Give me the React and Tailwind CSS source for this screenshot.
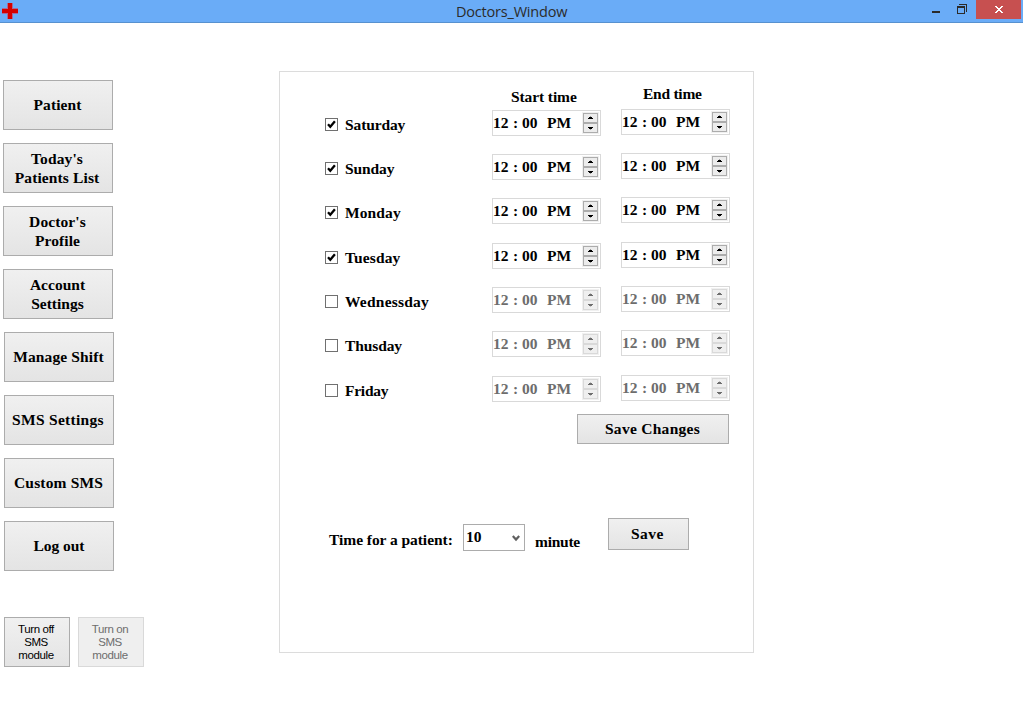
import React from "react";

const DAYS = [
  { name: "Saturday", on: true, row: "h-[44px]", track: "tracking-[-0.12px]" },
  { name: "Sunday", on: true, row: "h-[44px]", track: "tracking-[-0.12px]" },
  { name: "Monday", on: true, row: "h-[45px]", track: "tracking-[0.12px]" },
  { name: "Tuesday", on: true, row: "h-[44px]", track: "tracking-[0.12px]" },
  { name: "Wednessday", on: false, row: "h-[44px]", track: "tracking-[0.22px]" },
  { name: "Thusday", on: false, row: "h-[45px]", track: "tracking-[-0.12px]" },
  { name: "Friday", on: false, row: "h-[26px]", track: "tracking-[-0.25px]" },
];

const MENU = [
  { lines: ["Patient"], style: "pr-px pb-[2px] tracking-[0.1px]" },
  { lines: ["Today's", "Patients List"], style: "pb-px pr-[2px] tracking-[0.12px]" },
  { lines: ["Doctor's", "Profile"], style: "pb-px pr-px tracking-[0.1px]" },
  { lines: ["Account", "Settings"], style: "pb-px pr-px tracking-[0.02px]" },
  { lines: ["Manage Shift"], style: "ml-px pr-px pb-[2px] tracking-[0.12px]" },
  { lines: ["SMS Settings"], style: "ml-px pr-[2px] pb-[2px] tracking-[0.3px]" },
  { lines: ["Custom SMS"], style: "ml-px pr-px pb-[2px] tracking-[0.15px]" },
  { lines: ["Log out"], style: "ml-px pb-[2px] tracking-[-0.05px]" },
];

function Button({ className = "", children }) {
  return (
    <button
      className={`flex shrink-0 flex-col items-center justify-center border border-[#acacac] bg-linear-to-b from-[#f0f0f0] to-[#e4e4e4] font-bold leading-[19px] ${className}`}
    >
      {children}
    </button>
  );
}

function Checkbox({ checked }) {
  return (
    <svg width="13" height="13" viewBox="0 0 13 13" className="shrink-0">
      <rect x="0.5" y="0.5" width="12" height="12" fill="#fff" stroke="#707070" />
      {checked && <path d="M3 6.2L5.3 8.8L9.9 3.2" fill="none" stroke="#000" strokeWidth="2.3" />}
    </svg>
  );
}

function Spinner({ on }) {
  const edge = on ? "#acacac" : "#d9d9d9";
  const face = on ? "#ececec" : "#efefef";
  const arrow = on ? "#000" : "#6d6d6d";
  return (
    <svg width="17" height="22" viewBox="0 0 17 22" shapeRendering="crispEdges" className="shrink-0">
      <rect width="17" height="22" fill="#f0f0f0" />
      <rect x="1.5" y="1.5" width="14" height="9" fill={face} stroke={edge} />
      <rect x="1.5" y="11.5" width="14" height="9" fill={face} stroke={edge} />
      <path d="M7 5h3v1h1v1H6V6h1z" fill={arrow} />
      <path d="M8 4h1v1H8z" fill={arrow} opacity="0.35" />
      <path d="M6 15h5v1h-1v1H7v-1H6z" fill={arrow} />
      <path d="M8 17h1v1H8z" fill={arrow} opacity="0.35" />
    </svg>
  );
}

function TimeField({ on, className = "" }) {
  return (
    <div
      className={`flex h-[26px] w-[109px] shrink-0 border border-[#d9d9d9] bg-white pt-px ${
        on ? "text-black" : "text-[#6d6d6d]"
      } ${className}`}
    >
      <div className="flex w-[89px] pt-[2px] leading-[17px]">
        <span className="w-[20px]">12</span>
        <span className="w-[9px]">:</span>
        <span className="w-[25px]">00</span>
        <span>PM</span>
      </div>
      <Spinner on={on} />
    </div>
  );
}

function TitleBar() {
  return (
    <header className="flex h-[23px] shrink-0 border-b border-[#5791cf] bg-[#6aacf7]">
      <svg width="16" height="16" viewBox="0 0 16 16" className="mt-[3px] ml-[2px] shrink-0" shapeRendering="crispEdges">
        <path d="M5 0h6v5h5v6h-5v5H5v-5H0V5h5z" fill="#a8689a" />
        <path d="M6 0h4v6h6v4h-6v6H6v-6H0V6h6z" fill="#d40000" />
      </svg>
      <h1 className="flex-1 pl-[438px] font-['Open_Sans',sans-serif] text-[14.5px] leading-[23px] font-normal tracking-[-0.2px] text-[#2b2b2b]">
        Doctors_Window
      </h1>
      <svg width="35" height="22" viewBox="0 0 35 22" className="mr-[9px] shrink-0" shapeRendering="crispEdges">
        <path d="M0 11h8v2H0z" fill="#2b2b2b" />
        <path d="M27 4h8v8h-1V5h-7z" fill="#2b2b2b" />
        <path fillRule="evenodd" d="M25 6h8v8h-8zM26 8v5h6V8z" fill="#2b2b2b" />
      </svg>
      <div className="mr-[2px] flex h-[19px] w-[45px] shrink-0 justify-center bg-[#c75050]">
        <svg width="8" height="7" viewBox="0 0 8 7" className="mt-[6px] ml-[1px]" shapeRendering="crispEdges">
          <path
            d="M0 0h2v1h1v1h2V1h1V0h2v1H7v1H6v1H5v1h1v1h1v1h1v1H6V6H5V5H3v1H2v1H0V6h1V5h1V4h1V3H2V2H1V1H0z"
            fill="#fff"
          />
        </svg>
      </div>
    </header>
  );
}

export default function App() {
  return (
    <div className="flex h-[728px] w-[1023px] flex-col overflow-hidden bg-white font-['Liberation_Serif',serif] text-[15.5px] font-bold text-black">
      <TitleBar />
      <div className="flex flex-1">
        <nav className="flex w-[279px] shrink-0 flex-col pt-[57px] pl-[3px]">
          <div className="flex flex-col gap-[13px]">
            {MENU.map((m) => (
              <Button key={m.lines[0]} className={`h-[50px] w-[110px] ${m.style}`}>
                {m.lines.map((l) => (
                  <span key={l}>{l}</span>
                ))}
              </Button>
            ))}
          </div>
          <div className="mt-[46px] ml-px flex gap-2 font-['Liberation_Sans',sans-serif] text-[11.5px] leading-[13px] tracking-[-0.4px]">
            <button className="h-[50px] w-[66px] border border-[#acacac] bg-linear-to-b from-[#f0f0f0] to-[#e4e4e4] pr-[2px] font-normal">
              Turn off
              <br />
              SMS
              <br />
              module
            </button>
            <button className="h-[50px] w-[66px] border border-[#d9d9d9] bg-[#efefef] pr-[2px] font-normal text-[#6d6d6d]">
              Turn on
              <br />
              SMS
              <br />
              module
            </button>
          </div>
        </nav>

        <main className="mt-[48px] flex h-[582px] w-[475px] shrink-0 flex-col border border-[#dcdcdc]">
          <div className="flex h-[37px] leading-[17px]">
            <div className="w-[363px] pt-[16px] pl-[231px] tracking-[-0.1px]">Start time</div>
            <div className="pt-[13px] tracking-[-0.25px]">End time</div>
          </div>
          <div className="flex flex-col">
            {DAYS.map((d) => (
              <div key={d.name} className={`flex items-start pl-[45px] ${d.row}`}>
                <label className="flex w-[167px] pt-[9px]">
                  <Checkbox checked={d.on} />
                  <span className={`-mt-[2px] pl-[7px] leading-[17px] ${d.track}`}>{d.name}</span>
                </label>
                <TimeField on={d.on} className="mt-px" />
                <TimeField on={d.on} className="ml-[20px]" />
              </div>
            ))}
          </div>
          <Button className="mt-[13px] ml-[297px] h-[30px] w-[152px] pr-px pb-[2px] tracking-[0.28px]">Save Changes</Button>
          <div className="mt-[74px] flex items-start pl-[49px] leading-[17px]">
            <span className="w-[134px] pt-[13px] tracking-[-0.05px]">Time for a patient:</span>
            <div className="mt-[6px] flex h-[27px] w-[62px] justify-between border border-[#acacac] bg-white pt-[3px] pr-[4px] pl-[2px]">
              <span>10</span>
              <svg width="8" height="7" viewBox="0 0 8 7" className="mt-[7px]">
                <path d="M0.8 1L4 4.6L7.2 1" fill="none" stroke="#606060" strokeWidth="2.2" />
              </svg>
            </div>
            <span className="w-[83px] pt-[15px] pl-[10px] tracking-[-0.25px]">minute</span>
            <Button className="h-[32px] w-[81px] pr-[2px] pb-[2px] tracking-[0.5px]">Save</Button>
          </div>
        </main>
      </div>
    </div>
  );
}
